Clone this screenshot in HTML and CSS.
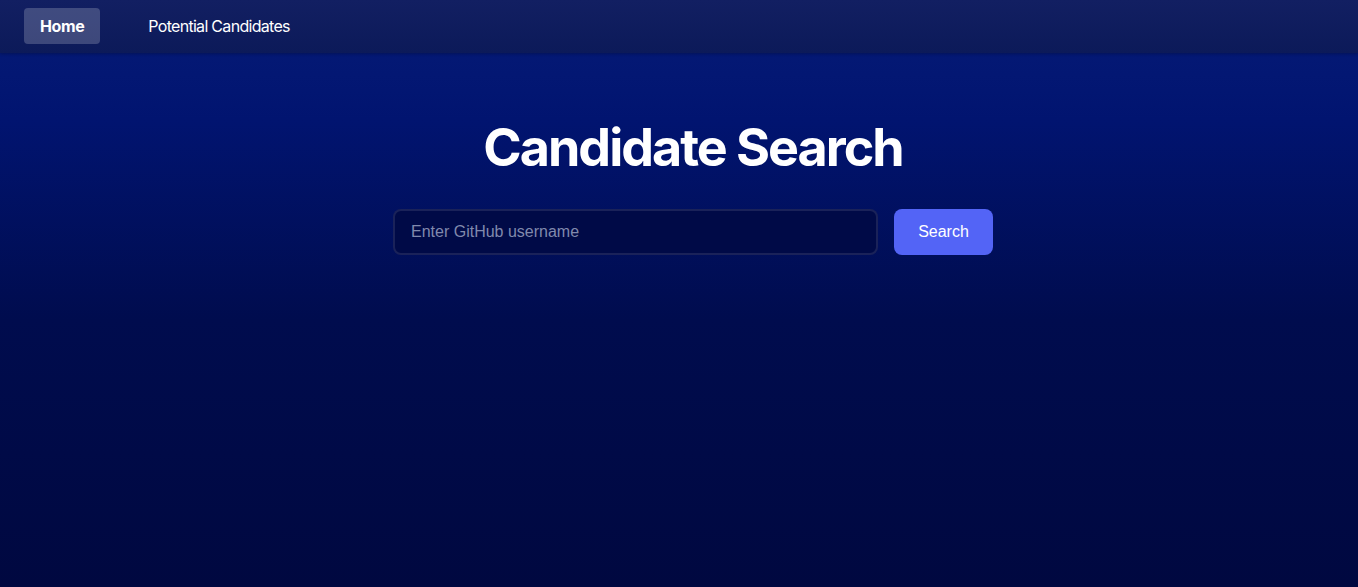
FILE: index.html
```html
<!DOCTYPE html>
<html lang="en">
<head>
<meta charset="utf-8">
<title>Candidate Search</title>
<link rel="stylesheet" href="styles.css">
</head>
<body>
<nav class="nav">
  <a class="nav-link active" href="#">Home</a>
  <a class="nav-link" href="#">Potential Candidates</a>
</nav>
<main class="main">
  <h1 class="title">Candidate Search</h1>
  <form class="search-form">
    <input class="search-input" type="text" placeholder="Enter GitHub username">
    <button class="search-btn" type="button">Search</button>
  </form>
</main>
</body>
</html>
```
FILE: styles.css
```css
* { box-sizing: border-box; }
html, body { margin: 0; height: 100%; }
body {
  font-family: Inter, "Noto Sans", sans-serif;
  background: linear-gradient(180deg, #061c78 0px, #011470 120px, #000c4e 320px, #000840 587px);
  color: #fff;
  display: flex;
  flex-direction: column;
}
.nav {
  height: 53px;
  display: flex;
  align-items: flex-start;
  gap: 32px;
  padding: 8px 24px 0;
  background: linear-gradient(180deg, #121f62 0%, #0c1a59 100%);
  box-shadow: 0 1px 3px rgba(0,0,0,0.25);
}
.nav-link {
  color: #fff;
  text-decoration: none;
  font-size: 16px;
  line-height: 20px;
  letter-spacing: -0.7px;
  padding: 8px 16px;
  border-radius: 4px;
}
.nav-link.active {
  background: rgba(255,255,255,0.2);
  font-weight: 700;
  letter-spacing: -0.4px;
}
.main {
  flex: 1;
  display: flex;
  flex-direction: column;
  align-items: center;
  padding-left: 28px;
}
.title {
  margin: 63px 0 30px;
  font-size: 52px;
  line-height: 63px;
  font-weight: 700;
  letter-spacing: -2px;
}
.search-form {
  display: flex;
  gap: 16px;
}
.search-input {
  width: 485px;
  height: 46px;
  padding: 0 16px;
  border: 2px solid rgba(255,255,255,0.1);
  border-radius: 8px;
  background: #000a47;
  color: #fff;
  font-family: "Liberation Sans", Arial, sans-serif;
  font-size: 16px;
  outline: none;
}
.search-input::placeholder { color: #8089ad; }
.search-btn {
  width: 99px;
  height: 46px;
  border: none;
  border-radius: 8px;
  background: #5364f6;
  color: #fff;
  font-family: "Liberation Sans", Arial, sans-serif;
  font-size: 16px;
  cursor: pointer;
}
```
